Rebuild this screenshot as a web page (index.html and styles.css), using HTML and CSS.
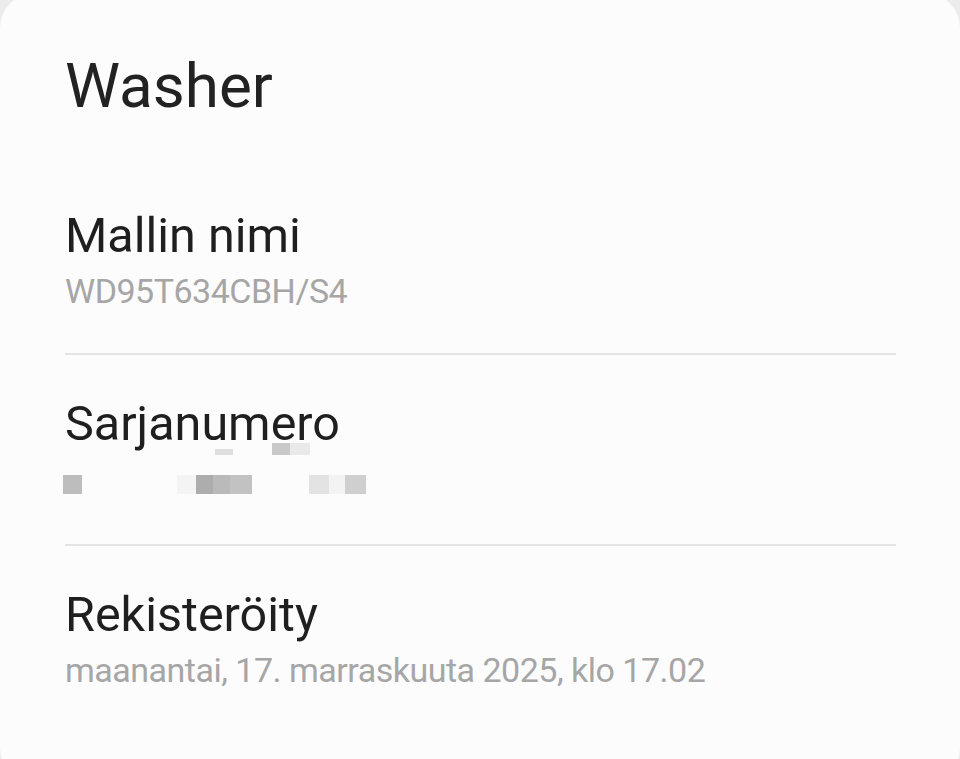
FILE: index.html
```html
<!DOCTYPE html>
<html>
<head>
  <title>Washer</title>
  <link rel="stylesheet" href="styles.css">
</head>
<body>
  <div class="card">
    <h1 class="title">Washer</h1>

    <div class="row">
      <div class="label">Mallin nimi</div>
      <div class="value">WD95T634CBH/S4</div>
    </div>

    <div class="row">
      <div class="label">Sarjanumero</div>
      <div class="value redacted">
        <span class="px px-a"></span>
        <span class="px px-b"></span>
        <span class="px px-c"></span>
        <span class="px px-d"></span>
        <span class="px px-e"></span>
        <span class="px px-f"></span>
        <span class="px px-g"></span>
        <span class="px px-h"></span>
        <span class="px px-i"></span>
        <span class="px px-j"></span>
        <span class="px px-k"></span>
      </div>
    </div>

    <div class="row last">
      <div class="label">Rekisteröity</div>
      <div class="value">maanantai, 17. marraskuuta 2025, klo 17.02</div>
    </div>
  </div>
</body>
</html>
```

FILE: styles.css
```css
body {
  margin: 0;
  background-color: #ececec;
  font-family: Roboto, "Noto Sans", sans-serif;
  overflow: hidden;
}

.card {
  margin-top: -7px;
  min-height: 790px;
  box-sizing: border-box;
  padding: 61px 64px 0 65px;
  background-color: #fcfcfc;
  border-radius: 35px;
}

.title {
  margin: 0 0 49px;
  font-size: 62px;
  line-height: 64px;
  font-weight: 400;
  color: #222222;
}

.row {
  padding: 43px 0 36px;
  border-bottom: 2px solid #e4e4e4;
}

.row.last {
  border-bottom: none;
}

.label {
  font-size: 48.5px;
  line-height: 52px;
  color: #1f1f1f;
}

.value {
  margin-top: 4px;
  font-size: 34px;
  line-height: 51px;
  letter-spacing: -0.5px;
  color: #a6a6a6;
}

/* pixelated serial number */
.redacted {
  position: relative;
  height: 54px;
}

.px {
  position: absolute;
  top: 21px;
  height: 19px;
}

.px-a { left: -2px; width: 19px; background: #bdbdbd; }
.px-b { left: 112px; width: 19px; background: #f4f4f4; }
.px-c { left: 131px; width: 17px; background: #adadad; }
.px-d { left: 148px; width: 17px; background: #bababa; }
.px-e { left: 165px; width: 22px; background: #c2c2c2; }
.px-f { left: 244px; width: 20px; background: #e3e3e3; }
.px-g { left: 264px; width: 16px; background: #f3f3f3; }
.px-h { left: 280px; width: 21px; background: #cfcfcf; }
.px-i { left: 150px; top: -5px; width: 18px; height: 6px; background: #dedede; }
.px-j { left: 207px; top: -11px; width: 18px; height: 12px; background: #c9c9c9; }
.px-k { left: 225px; top: -11px; width: 20px; height: 12px; background: #e9e9e9; }
```
